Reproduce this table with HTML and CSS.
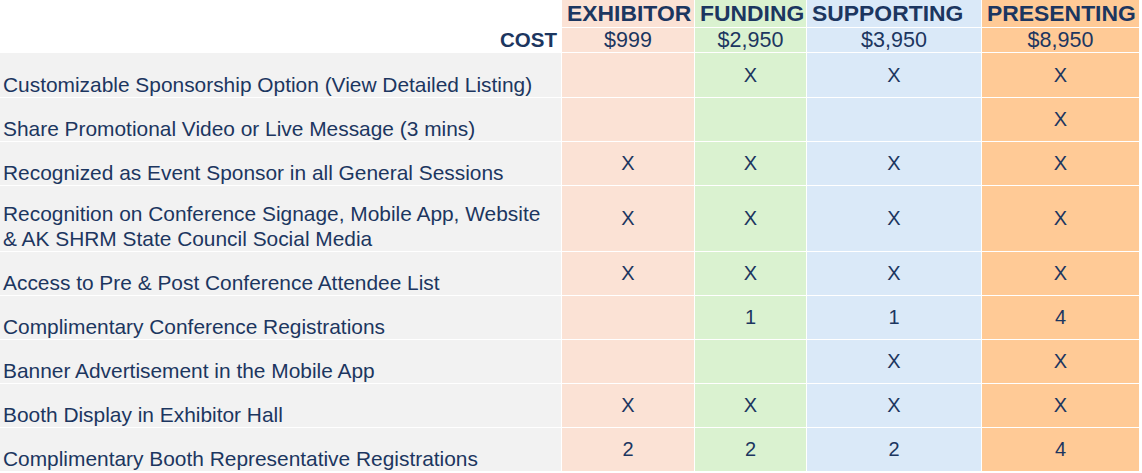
FILE: index.html
```html
<!DOCTYPE html>
<html lang="en">
<head>
<meta charset="utf-8">
<title>Sponsorship Levels</title>
<link rel="stylesheet" href="styles.css">
</head>
<body>
<div class="sheet">
  <div class="cell blank"></div>
  <div class="cell tier ex">EXHIBITOR</div>
  <div class="cell tier fu">FUNDING</div>
  <div class="cell tier su">SUPPORTING</div>
  <div class="cell tier pr">PRESENTING</div>

  <div class="cell costlabel">COST</div>
  <div class="cell price ex">$999</div>
  <div class="cell price fu">$2,950</div>
  <div class="cell price su">$3,950</div>
  <div class="cell price pr">$8,950</div>

  <div class="cell label">Customizable Sponsorship Option (View Detailed Listing)</div>
  <div class="cell mark ex"></div>
  <div class="cell mark fu">X</div>
  <div class="cell mark su">X</div>
  <div class="cell mark pr">X</div>

  <div class="cell label">Share Promotional Video or Live Message (3 mins)</div>
  <div class="cell mark ex"></div>
  <div class="cell mark fu"></div>
  <div class="cell mark su"></div>
  <div class="cell mark pr">X</div>

  <div class="cell label">Recognized as Event Sponsor in all General Sessions</div>
  <div class="cell mark ex">X</div>
  <div class="cell mark fu">X</div>
  <div class="cell mark su">X</div>
  <div class="cell mark pr">X</div>

  <div class="cell label">Recognition on Conference Signage, Mobile App, Website<br>&amp; AK SHRM State Council Social Media</div>
  <div class="cell mark ex">X</div>
  <div class="cell mark fu">X</div>
  <div class="cell mark su">X</div>
  <div class="cell mark pr">X</div>

  <div class="cell label">Access to Pre &amp; Post Conference Attendee List</div>
  <div class="cell mark ex">X</div>
  <div class="cell mark fu">X</div>
  <div class="cell mark su">X</div>
  <div class="cell mark pr">X</div>

  <div class="cell label">Complimentary Conference Registrations</div>
  <div class="cell mark ex"></div>
  <div class="cell mark fu">1</div>
  <div class="cell mark su">1</div>
  <div class="cell mark pr">4</div>

  <div class="cell label">Banner Advertisement in the Mobile App</div>
  <div class="cell mark ex"></div>
  <div class="cell mark fu"></div>
  <div class="cell mark su">X</div>
  <div class="cell mark pr">X</div>

  <div class="cell label">Booth Display in Exhibitor Hall</div>
  <div class="cell mark ex">X</div>
  <div class="cell mark fu">X</div>
  <div class="cell mark su">X</div>
  <div class="cell mark pr">X</div>

  <div class="cell label">Complimentary Booth Representative Registrations</div>
  <div class="cell mark ex">2</div>
  <div class="cell mark fu">2</div>
  <div class="cell mark su">2</div>
  <div class="cell mark pr">4</div>
</div>
</body>
</html>
```
FILE: styles.css
```css
html, body {
  margin: 0;
  padding: 0;
  background: #ffffff;
}

.sheet {
  display: grid;
  grid-template-columns: 561px 132px 111px 174px 157px;
  grid-template-rows: 27px 24px 44px 43px 43px 65px 43px 43px 43px 43px 43px;
  gap: 1px;
  font-family: "Liberation Sans", Arial, sans-serif;
  color: #1c3660;
}

.cell {
  display: flex;
  overflow: visible;
  white-space: nowrap;
}

.blank { background: #ffffff; }

.ex { background: #fbe2d5; }
.fu { background: #daf2d0; }
.su { background: #dae9f8; }
.pr { background: #ffca96; }

.tier {
  align-items: center;
  padding-left: 5px;
  font-weight: bold;
  font-size: 22.9px;
  line-height: 27px;
}

.costlabel {
  background: #ffffff;
  justify-content: flex-end;
  align-items: center;
  padding-right: 4px;
  font-weight: bold;
  font-size: 20.5px;
}

.price {
  justify-content: center;
  align-items: center;
  font-size: 21.5px;
}

.label {
  background: #f2f2f2;
  align-items: flex-end;
  padding-left: 3px;
  font-size: 20.9px;
  line-height: 25px;
}

.mark {
  justify-content: center;
  align-items: center;
  font-size: 20px;
}
```
